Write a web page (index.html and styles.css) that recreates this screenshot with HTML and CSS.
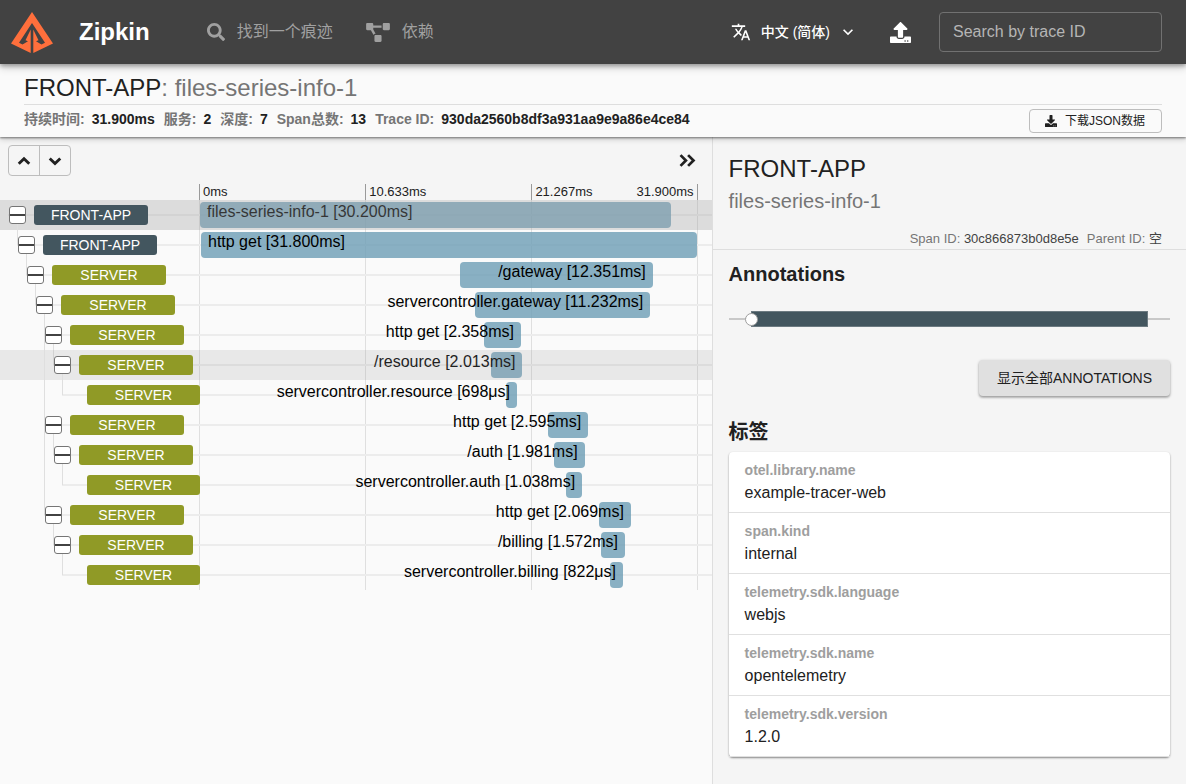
FILE: index.html
```html
<!DOCTYPE html>
<html lang="zh-CN">
<head>
<meta charset="utf-8">
<meta name="viewport" content="width=device-width, initial-scale=1">
<title>Zipkin</title>
<link rel="stylesheet" href="styles.css">
</head>
<body>
<header class="appbar">
  <a class="brand" href="#">
    <svg class="logo" viewBox="0 0 42 41" aria-hidden="true"><path fill="#ff6f3c" fill-rule="evenodd" d="M21 0 42 31.500 22.300 41V17.500L27.500 28.200 25 29.300 30.500 32.600 34 30.700 21 11 8 30.700 11.500 32.600 17 29.300 14.500 28.200 19.700 17.500V41L0 31.500Z"/></svg>
    <span class="brand-name">Zipkin</span>
  </a>
  <nav class="nav">
    <a class="nav-link" href="#">
      <svg class="icon-search" viewBox="0 0 512 512" aria-hidden="true"><path fill="currentColor" d="M505 442.700 405.300 343c-4.500-4.500-10.600-7-17-7H372c27.600-35.300 44-79.700 44-128C416 93.100 322.900 0 208 0S0 93.100 0 208s93.100 208 208 208c48.300 0 92.700-16.400 128-44v16.300c0 6.400 2.500 12.500 7 17l99.700 99.700c9.400 9.400 24.600 9.400 33.900 0l28.300-28.300c9.400-9.400 9.400-24.600.1-34zM208 336c-70.700 0-128-57.200-128-128 0-70.700 57.200-128 128-128 70.700 0 128 57.200 128 128 0 70.700-57.200 128-128 128z"/></svg>
      <span>找到一个痕迹</span>
    </a>
    <a class="nav-link" href="#">
      <svg class="icon-diagram" viewBox="0 0 640 512" aria-hidden="true"><path fill="currentColor" d="M384 320H256c-17.670 0-32 14.330-32 32v128c0 17.670 14.330 32 32 32h128c17.670 0 32-14.330 32-32V352c0-17.670-14.330-32-32-32zM192 32c0-17.670-14.330-32-32-32H32C14.330 0 0 14.330 0 32v128c0 17.670 14.330 32 32 32h95.720l73.160 128.040C211.980 300.980 232.400 288 256 288h.28L192 175.510V128h224V64H192V32zM608 0H480c-17.670 0-32 14.330-32 32v128c0 17.670 14.330 32 32 32h128c17.670 0 32-14.330 32-32V32c0-17.670-14.330-32-32-32z"/></svg>
      <span>依赖</span>
    </a>
  </nav>
  <div class="tools">
    <button class="lang" type="button" aria-haspopup="true">
      <svg class="icon-lang" viewBox="0 0 24 24" aria-hidden="true"><path fill="currentColor" d="M12.870 15.070l-2.540-2.510.03-.03c1.740-1.940 2.980-4.170 3.710-6.530H17V4h-7V2H8v2H1v1.990h11.170C11.500 7.920 10.440 9.750 9 11.350 8.070 10.320 7.300 9.190 6.690 8h-2c.73 1.630 1.730 3.170 2.980 4.560l-5.090 5.020L4 19l5-5 3.110 3.110.76-2.040zM18.500 10h-2L12 22h2l1.120-3h4.750L21 22h2l-4.500-12zm-2.620 7l1.620-4.330L19.120 17h-3.240z"/></svg>
      <span>中文 (简体)</span>
      <svg class="icon-expand" viewBox="0 0 24 24" aria-hidden="true"><path fill="currentColor" d="M16.590 8.590 12 13.170 7.410 8.590 6 10l6 6 6-6z"/></svg>
    </button>
    <button class="upload" type="button" aria-label="Upload JSON">
      <svg viewBox="0 0 512 512" aria-hidden="true"><path fill="currentColor" d="M296 384h-80c-13.300 0-24-10.700-24-24V192h-87.700c-17.800 0-26.700-21.500-14.100-34.100L242.300 5.700c7.500-7.500 19.800-7.500 27.300 0l152.200 152.200c12.600 12.600 3.700 34.100-14.100 34.100H320v168c0 13.300-10.700 24-24 24zm216-8v112c0 13.300-10.700 24-24 24H24c-13.300 0-24-10.700-24-24V376c0-13.300 10.700-24 24-24h136v8c0 30.900 25.100 56 56 56h80c30.900 0 56-25.100 56-56v-8h136c13.300 0 24 10.700 24 24zm-124 88c0-11-9-20-20-20s-20 9-20 20 9 20 20 20 20-9 20-20zm64 0c0-11-9-20-20-20s-20 9-20 20 9 20 20 20 20-9 20-20z"/></svg>
    </button>
    <input class="search" type="text" placeholder="Search by trace ID" aria-label="Search by trace ID">
  </div>
</header>

<section class="trace-head">
  <h1 class="trace-title">FRONT-APP<span class="muted">: files-series-info-1</span></h1>
  <div class="trace-info">
    <dl class="facts">
      <div><dt>持续时间:</dt><dd>31.900ms</dd></div>
      <div><dt>服务:</dt><dd>2</dd></div>
      <div><dt>深度:</dt><dd>7</dd></div>
      <div><dt>Span总数:</dt><dd>13</dd></div>
      <div><dt>Trace ID:</dt><dd>930da2560b8df3a931aa9e9a86e4ce84</dd></div>
    </dl>
    <button class="download" type="button">
      <svg viewBox="0 0 512 512" aria-hidden="true"><path fill="currentColor" d="M216 0h80c13.300 0 24 10.700 24 24v168h87.700c17.800 0 26.700 21.500 14.100 34.100L269.700 378.300c-7.500 7.500-19.800 7.500-27.300 0L90.100 226.100c-12.600-12.600-3.700-34.100 14.100-34.100H192V24c0-13.300 10.700-24 24-24zm296 376v112c0 13.300-10.700 24-24 24H24c-13.300 0-24-10.700-24-24V376c0-13.300 10.700-24 24-24h146.700l49 49c20.100 20.100 52.500 20.100 72.600 0l49-49H488c13.300 0 24 10.700 24 24zm-124 88c0-11-9-20-20-20s-20 9-20 20 9 20 20 20 20-9 20-20zm64 0c0-11-9-20-20-20s-20 9-20 20 9 20 20 20 20-9 20-20z"/></svg>
      <span>下载JSON数据</span>
    </button>
  </div>
</section>

<main class="content">
  <section class="timeline">
    <div class="timeline-head">
      <div class="toolbar">
        <div class="step-buttons">
          <button type="button" aria-label="Previous span"><svg viewBox="0 0 12 12" aria-hidden="true"><path d="M1.500 8.300 6 4 10.500 8.300"/></svg></button>
          <button type="button" aria-label="Next span"><svg viewBox="0 0 12 12" aria-hidden="true"><path d="M1.500 3.800 6 8.100 10.500 3.800"/></svg></button>
        </div>
        <button class="collapse" type="button" aria-label="Close details"><svg viewBox="0 0 16 12" aria-hidden="true"><path d="M2 1 7 6 2 11M9 1 14 6 9 11"/></svg></button>
      </div>
      <div class="ticks">
        <span>0ms</span><span>10.633ms</span><span class="last"><b>21.267ms</b><b>31.900ms</b></span>
      </div>
    </div>
    <div class="rows">
      <div class="gridlines"><i></i><i></i><i></i></div>
      <div class="row selected" style="--depth:0;--span:0"><div class="node"><button class="toggle" type="button" aria-label="Collapse"></button><span class="service front">FRONT-APP</span></div><div class="lane"><div class="bar wide" style="margin-left:0%;width:94.6%"><span>files-series-info-1 [30.200ms]</span></div></div></div>
      <div class="row" style="--depth:1;--span:1"><div class="node"><button class="toggle" type="button" aria-label="Collapse"></button><span class="service front">FRONT-APP</span></div><div class="lane"><div class="bar wide" style="margin-left:0.2%;width:99.7%"><span>http get [31.800ms]</span></div></div></div>
      <div class="row" style="--depth:2;--span:1"><div class="node"><button class="toggle" type="button" aria-label="Collapse"></button><span class="service">SERVER</span></div><div class="lane"><div class="bar" style="margin-left:52.3%;width:38.7%"><span>/gateway [12.351ms]</span></div></div></div>
      <div class="row" style="--depth:3;--span:1"><div class="node"><button class="toggle" type="button" aria-label="Collapse"></button><span class="service">SERVER</span></div><div class="lane"><div class="bar" style="margin-left:55.3%;width:35.2%"><span>servercontroller.gateway [11.232ms]</span></div></div></div>
      <div class="row" style="--depth:4;--span:1"><div class="node"><button class="toggle" type="button" aria-label="Collapse"></button><span class="service">SERVER</span></div><div class="lane"><div class="bar" style="margin-left:57.1%;width:7.4%"><span>http get [2.358ms]</span></div></div></div>
      <div class="row hovered" style="--depth:5;--span:1"><div class="node"><button class="toggle" type="button" aria-label="Collapse"></button><span class="service">SERVER</span></div><div class="lane"><div class="bar" style="margin-left:58.5%;width:6.3%"><span>/resource [2.013ms]</span></div></div></div>
      <div class="row leaf" style="--depth:6;--span:1"><div class="node"><span class="service">SERVER</span></div><div class="lane"><div class="bar" style="margin-left:61.5%;width:2.2%"><span>servercontroller.resource [698μs]</span></div></div></div>
      <div class="row" style="--depth:4;--span:4"><div class="node"><button class="toggle" type="button" aria-label="Collapse"></button><span class="service">SERVER</span></div><div class="lane"><div class="bar" style="margin-left:69.9%;width:8.1%"><span>http get [2.595ms]</span></div></div></div>
      <div class="row" style="--depth:5;--span:1"><div class="node"><button class="toggle" type="button" aria-label="Collapse"></button><span class="service">SERVER</span></div><div class="lane"><div class="bar" style="margin-left:71.1%;width:6.2%"><span>/auth [1.981ms]</span></div></div></div>
      <div class="row leaf" style="--depth:6;--span:1"><div class="node"><span class="service">SERVER</span></div><div class="lane"><div class="bar" style="margin-left:73.6%;width:3.2%"><span>servercontroller.auth [1.038ms]</span></div></div></div>
      <div class="row" style="--depth:4;--span:7"><div class="node"><button class="toggle" type="button" aria-label="Collapse"></button><span class="service">SERVER</span></div><div class="lane"><div class="bar" style="margin-left:80.1%;width:6.5%"><span>http get [2.069ms]</span></div></div></div>
      <div class="row" style="--depth:5;--span:1"><div class="node"><button class="toggle" type="button" aria-label="Collapse"></button><span class="service">SERVER</span></div><div class="lane"><div class="bar" style="margin-left:80.5%;width:4.9%"><span>/billing [1.572ms]</span></div></div></div>
      <div class="row leaf" style="--depth:6;--span:1"><div class="node"><span class="service">SERVER</span></div><div class="lane"><div class="bar" style="margin-left:82.4%;width:2.6%"><span>servercontroller.billing [822μs]</span></div></div></div>
    </div>
  </section>

  <aside class="detail">
    <header class="detail-head">
      <h2 class="detail-service">FRONT-APP</h2>
      <p class="detail-span">files-series-info-1</p>
      <p class="ids"><span>Span ID: <b>30c866873b0d8e5e</b></span><span>Parent ID: <b>空</b></span></p>
    </header>
    <div class="detail-body">
      <h3 class="heading">Annotations</h3>
      <div class="annotation-track"><div class="annotation-bar"><button class="marker" type="button" aria-label="Annotation"></button></div></div>
      <button class="show-all" type="button">显示全部ANNOTATIONS</button>
      <h3 class="heading tags-heading">标签</h3>
      <dl class="tags">
        <div><dt>otel.library.name</dt><dd>example-tracer-web</dd></div>
        <div><dt>span.kind</dt><dd>internal</dd></div>
        <div><dt>telemetry.sdk.language</dt><dd>webjs</dd></div>
        <div><dt>telemetry.sdk.name</dt><dd>opentelemetry</dd></div>
        <div><dt>telemetry.sdk.version</dt><dd>1.2.0</dd></div>
      </dl>
    </div>
  </aside>
</main>
</body>
</html>
```

FILE: styles.css
```css
* { box-sizing: border-box; }

body {
  margin: 0;
  min-height: 100vh;
  display: flex;
  flex-direction: column;
  background: #fafafa;
  color: #212121;
  font-family: "Liberation Sans", "Noto Sans CJK SC", sans-serif;
  font-size: 14px;
}

h1, h2, h3, p, dl, dd { margin: 0; font-weight: normal; }
button, input { font: inherit; color: inherit; }
button { padding: 0; border: 0; background: none; cursor: pointer; }
svg { display: block; }
a { color: inherit; text-decoration: none; }

/* App bar */
.appbar {
  position: relative;
  z-index: 3;
  display: flex;
  align-items: center;
  min-height: 64px;
  padding: 0 24px 0 11px;
  background: #424242;
  color: #fff;
  box-shadow: 0 2px 4px rgba(0, 0, 0, .3), 0 4px 8px rgba(0, 0, 0, .16);
}
.brand { display: flex; align-items: center; gap: 26px; }
.logo { width: 42px; height: 41px; }
.brand-name { font-size: 24px; font-weight: bold; }
.nav { display: flex; gap: 33px; margin-left: 57px; color: #a0a0a0; font-size: 16px; line-height: 20px; }
.nav-link { display: flex; align-items: center; gap: 12px; }
.icon-search { width: 18px; height: 18px; }
.icon-diagram { width: 24px; height: 19px; }
.tools { display: flex; align-items: center; margin-left: auto; }
.lang { display: flex; align-items: center; font-weight: 500; line-height: 20px; }
.icon-lang { width: 20px; height: 20px; margin-right: 10px; }
.icon-expand { width: 20px; height: 20px; margin-left: 8px; }
.upload { margin: 0 28px 0 32px; }
.upload svg { width: 21px; height: 21px; }
.search {
  width: 223px;
  height: 40px;
  padding: 0 13px;
  border: 1px solid #717171;
  border-radius: 4px;
  background: transparent;
  font-size: 16px;
}
.search::placeholder { color: #b5b5b5; opacity: 1; }

/* Trace summary */
.trace-head {
  position: relative;
  z-index: 2;
  padding: 8px 24px 4px;
  background: #fafafa;
  box-shadow: 0 1px 2px rgba(0, 0, 0, .45), 0 2px 6px rgba(0, 0, 0, .2);
}
.trace-title {
  border-bottom: 1px solid #dedede;
  font-size: 24px;
  line-height: 32px;
}
.muted { color: #757575; }
.trace-info { display: flex; justify-content: space-between; align-items: flex-start; padding-top: 4px; }
.facts { display: flex; gap: 9px; font-weight: bold; line-height: 20px; }
.facts div { display: flex; gap: 7px; }
.facts dt { color: #757575; }
.facts dd { font-weight: bold; }
.download {
  display: flex;
  align-items: center;
  gap: 8px;
  height: 24px;
  padding: 0 16px 0 15px;
  border: 1px solid #bdbdbd;
  border-radius: 4px;
  font-size: 12px;
  line-height: 20px;
}
.download svg { width: 12px; height: 12px; }

/* Panels */
.content { flex: 1; display: grid; grid-template-columns: 3fr 2fr; }
.timeline { min-width: 0; }
.timeline-head { background: #f5f5f5; }
.toolbar { display: flex; justify-content: space-between; align-items: center; padding: 8px 16px 8px 8px; }
.step-buttons { display: flex; border: 1px solid #bdbdbd; border-radius: 4px; }
.step-buttons button { display: grid; place-items: center; width: 30px; height: 29px; }
.step-buttons button + button { width: 31px; border-left: 1px solid #bdbdbd; }
.step-buttons svg { width: 14px; height: 14px; }
.collapse svg { width: 18px; height: 13px; }
.step-buttons path, .collapse path { fill: none; stroke: #212121; stroke-width: 2.500; }
.ticks {
  display: grid;
  grid-template-columns: repeat(3, 1fr);
  margin: 0 14px 0 199px;
  font-size: 13px;
  line-height: 16px;
}
.ticks span { padding-left: 3px; border-left: 1px solid #9a9a9a; }
.ticks b { font-weight: normal; }
.ticks .last { display: flex; justify-content: space-between; padding-right: 3px; border-right: 1px solid #9a9a9a; }

/* Span rows */
.rows { position: relative; }
.gridlines {
  position: absolute;
  inset: 0 14px 0 199px;
  display: grid;
  grid-template-columns: repeat(3, 1fr);
  border-right: 1px solid #dfdfdf;
}
.gridlines i { border-left: 1px solid #dfdfdf; }
.row {
  position: relative;
  display: grid;
  grid-template-columns: 200px 1fr;
  align-items: center;
  height: 30px;
  padding-right: 14px;
}
.row::before {
  content: "";
  position: absolute;
  inset: 14px 0 auto calc(var(--depth) * 9px + 8px);
  height: 2px;
  background: #ececec;
}
.row.selected::after, .row.hovered::after {
  content: "";
  position: absolute;
  inset: 0;
}
.row.selected::after { background: rgba(160, 160, 160, .33); }
.row.hovered::after { background: rgba(160, 160, 160, .2); }
.node {
  display: flex;
  align-items: center;
  gap: 8px;
  padding-left: calc(var(--depth) * 9px + 9px);
}
.leaf .node { padding-left: calc(var(--depth) * 9px + 33px); }
.node::before {
  content: "";
  position: absolute;
  left: calc(var(--depth) * 9px + 8px);
  bottom: 15px;
  width: 1px;
  height: calc(var(--span) * 30px);
  background: #dfdfdf;
}
.toggle {
  position: relative;
  z-index: 1;
  display: grid;
  align-items: center;
  width: 17px;
  height: 18px;
  border: 1px solid #757575;
  border-radius: 3px;
  background: #fff;
}
.toggle::before { content: ""; height: 2px; background: #424242; }
.service {
  position: relative;
  z-index: 1;
  width: 114px;
  border-radius: 3px;
  background: #909a26;
  color: #fff;
  line-height: 20px;
  text-align: center;
}
.service.front { background: #43565f; }
.lane { position: relative; min-width: 0; }
.bar {
  display: flex;
  justify-content: flex-end;
  height: 26px;
  padding-right: 7px;
  border-radius: 4px;
  background: rgba(109, 158, 181, .8);
  color: #000;
  font-size: 16px;
  line-height: 20px;
  white-space: nowrap;
}
.bar.wide { justify-content: flex-start; padding-left: 7px; }

/* Span detail */
.detail { min-width: 0; border-left: 1px solid #dedede; background: #f5f5f5; }
.detail-head { padding: 16px 24px 0 16px; border-bottom: 1px solid #dedede; }
.detail-service { font-size: 24px; line-height: 32px; }
.detail-span { color: #757575; font-size: 20px; line-height: 32px; }
.ids {
  display: flex;
  justify-content: flex-end;
  gap: 8px;
  padding-top: 12px;
  color: #757575;
  font-size: 13px;
  line-height: 20px;
}
.ids b { color: #424242; font-weight: normal; }
.detail-body { display: flex; flex-direction: column; padding: 8px 16px 24px; }
.heading { font-size: 20px; font-weight: bold; line-height: 32px; }
.annotation-track {
  margin-top: 21px;
  padding: 0 5%;
  background: linear-gradient(#c8c8c8, #c8c8c8) center / 100% 2px no-repeat;
}
.annotation-bar { position: relative; height: 16px; border: 1px solid #6c7a81; background: #43565f; }
.marker {
  position: absolute;
  top: 1px;
  left: -7px;
  width: 13px;
  height: 13px;
  border: 1px solid #9e9e9e;
  border-radius: 50%;
  background: #fff;
}
.show-all {
  align-self: flex-end;
  height: 36px;
  margin-top: 33px;
  padding: 0 18px;
  border-radius: 4px;
  background: #e0e0e0;
  box-shadow: 0 1px 3px rgba(0, 0, 0, .3), 0 2px 2px rgba(0, 0, 0, .14);
  line-height: 20px;
}
.tags-heading { margin-top: 20px; }
.tags {
  margin-top: 4px;
  border-radius: 4px;
  background: #fff;
  box-shadow: 0 1px 2px rgba(0, 0, 0, .45);
}
.tags div { padding: 8px 16px; border-bottom: 1px solid #e0e0e0; }
.tags dt { color: #9e9e9e; font-weight: bold; line-height: 21px; }
.tags dd { font-size: 16px; line-height: 23px; }
```
